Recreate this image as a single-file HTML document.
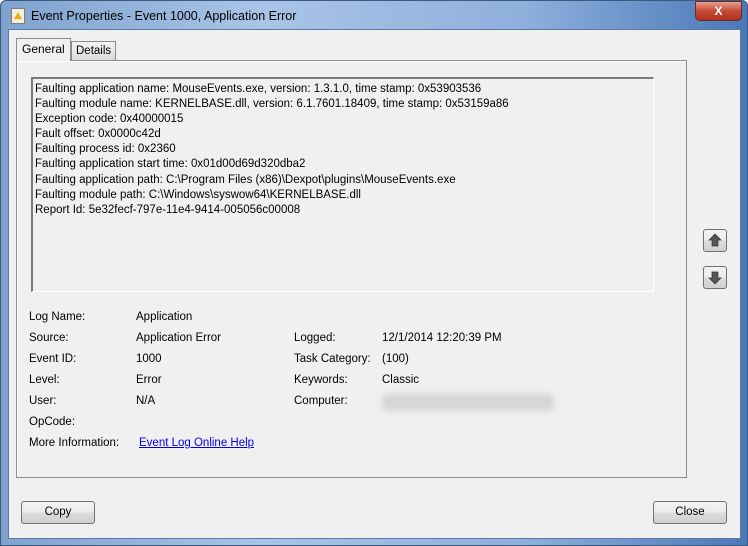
<!DOCTYPE html>
<html><head><meta charset="utf-8"><style>
*{margin:0;padding:0;box-sizing:border-box}
body{width:748px;height:546px;overflow:hidden;font-family:"Liberation Sans",sans-serif;font-size:11.5px;color:#000;background:#fff}
.win{position:absolute;left:0;top:0;width:748px;height:546px;border-radius:6px 6px 0 0;background:linear-gradient(90deg,#7fa2cf 0%,#a9c4e6 35%,#8fb0dc 70%,#4a78b8 100%);border:1px solid #3b5a82}
.title{position:absolute;left:30px;top:8px;font-size:12.5px;color:#000}
.icon{position:absolute;left:10px;top:7px;width:14px;height:16px;background:#f2efe2;border:1px solid #8a7f65}
.icon:after{content:"";position:absolute;left:2px;top:3px;width:0;height:0;border-left:4px solid transparent;border-right:4px solid transparent;border-bottom:7px solid #e8b000}
.close{position:absolute;left:694px;top:0;width:47px;height:20px;border-radius:0 0 5px 5px;background:linear-gradient(#e8a093,#c74a36 50%,#b0321f);border:1px solid #6b2a20;color:#fff;font-weight:bold;text-align:center;font-size:12px;line-height:18px}
.client{position:absolute;left:8px;top:29px;width:733px;height:510px;background:#f0f0f0;border:1px solid #5c7aa0}
.panel{position:absolute;left:16px;top:60px;width:671px;height:418px;border:1px solid #898c95;background:#f0f0f0;box-shadow:inset 1px 1px 0 #fff}
.tab{position:absolute;border:1px solid #898c95;border-bottom:none;padding:0 5px}
.t1{left:16px;top:38px;height:23px;line-height:20px;background:#f0f0f0;z-index:2;font-size:12px}
.t2{left:71px;top:41px;height:19px;line-height:18px;background:linear-gradient(#f2f2f2,#dcdcdc);width:45px;padding:0 4px}
.box{position:absolute;left:31px;top:77px;width:623px;height:215px;border-top:2px solid #7a7a7a;border-left:2px solid #7a7a7a;border-right:1px solid #fff;border-bottom:1px solid #fff;padding:3px 0 0 2px;line-height:15.1px;white-space:pre}
.l{position:absolute;white-space:nowrap}
.btn{position:absolute;border:1px solid #707070;border-radius:3px;background:linear-gradient(#f2f2f2 0%,#ebebeb 50%,#dddddd 51%,#cfcfcf 100%);text-align:center}
a{color:#0000ee;text-decoration:underline}
.blur{position:absolute;left:382px;top:393px;width:172px;height:18px;background:#d6d6d6;filter:blur(3px);border-radius:6px}
</style></head><body>
<div class="win">
<div class="icon"></div>
<div class="title">Event Properties - Event 1000, Application Error</div>
<div class="close">X</div>
</div>
<div class="client"></div>
<div class="panel"></div>
<div class="tab t2">Details</div>
<div class="tab t1">General</div>
<div class="box">Faulting application name: MouseEvents.exe, version: 1.3.1.0, time stamp: 0x53903536
Faulting module name: KERNELBASE.dll, version: 6.1.7601.18409, time stamp: 0x53159a86
Exception code: 0x40000015
Fault offset: 0x0000c42d
Faulting process id: 0x2360
Faulting application start time: 0x01d00d69d320dba2
Faulting application path: C:\Program Files (x86)\Dexpot\plugins\MouseEvents.exe
Faulting module path: C:\Windows\syswow64\KERNELBASE.dll
Report Id: 5e32fecf-797e-11e4-9414-005056c00008</div>
<div class="btn" style="left:703px;top:229px;width:24px;height:23px"><svg width="22" height="21" viewBox="0 0 22 21"><path d="M11 4 L17 10 L14 10 L14 16 L8 16 L8 10 L5 10 Z" fill="#555" stroke="#333" stroke-width="0.7"/></svg></div>
<div class="btn" style="left:703px;top:266px;width:24px;height:23px"><svg width="22" height="21" viewBox="0 0 22 21"><path d="M11 17 L17 11 L14 11 L14 5 L8 5 L8 11 L5 11 Z" fill="#555" stroke="#333" stroke-width="0.7"/></svg></div>
<div class="l" style="left:29px;top:311px">Log Name:</div><div class="l" style="left:136px;top:311px">Application</div>
<div class="l" style="left:29px;top:332px">Source:</div><div class="l" style="left:136px;top:332px">Application Error</div>
<div class="l" style="left:294px;top:332px">Logged:</div><div class="l" style="left:382px;top:332px">12/1/2014 12:20:39 PM</div>
<div class="l" style="left:29px;top:353px">Event ID:</div><div class="l" style="left:136px;top:353px">1000</div>
<div class="l" style="left:294px;top:353px">Task Category:</div><div class="l" style="left:382px;top:353px">(100)</div>
<div class="l" style="left:29px;top:374px">Level:</div><div class="l" style="left:136px;top:374px">Error</div>
<div class="l" style="left:294px;top:374px">Keywords:</div><div class="l" style="left:382px;top:374px">Classic</div>
<div class="l" style="left:29px;top:395px">User:</div><div class="l" style="left:136px;top:395px">N/A</div>
<div class="l" style="left:294px;top:395px">Computer:</div><div class="blur"></div>
<div class="l" style="left:29px;top:416px">OpCode:</div>
<div class="l" style="left:29px;top:437px">More Information:</div><div class="l" style="left:139px;top:437px"><a>Event Log Online Help</a></div>
<div class="btn" style="left:21px;top:501px;width:74px;height:23px;line-height:21px">Copy</div>
<div class="btn" style="left:653px;top:501px;width:74px;height:23px;line-height:21px">Close</div>
</body></html>
